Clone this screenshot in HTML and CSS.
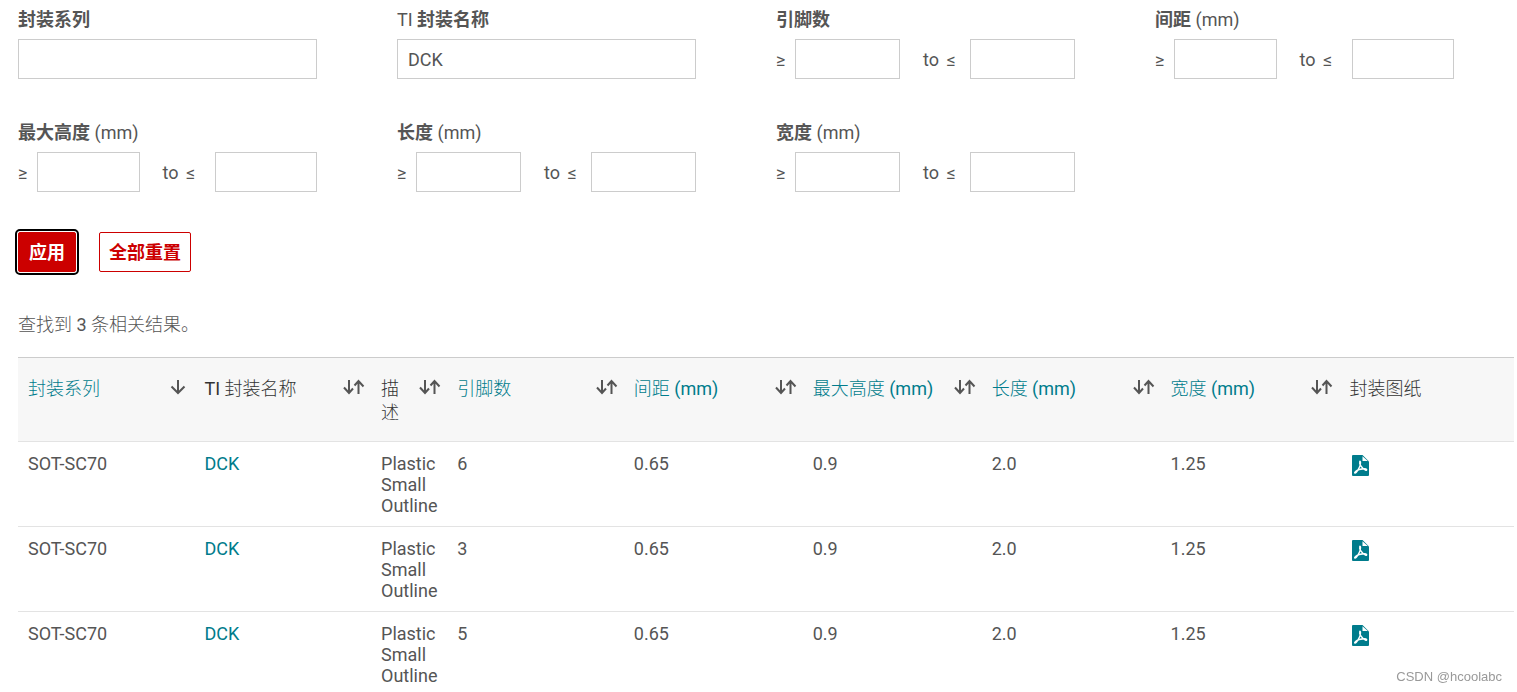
FILE: index.html
```html
<!DOCTYPE html>
<html lang="zh-CN">
<head>
<meta charset="utf-8">
<title>封装查找</title>
<link rel="stylesheet" href="styles.css">
</head>
<body>
<svg class="sprite" aria-hidden="true">
  <symbol id="sort" viewBox="0 0 22 16"><path d="M6 1V14M1 8.500L6 14L10 9.500M15.500 15V2M11.500 6.500L15.500 2L20.500 7.500"/></symbol>
  <symbol id="down" viewBox="0 0 16 16"><path d="M8 1V14M1.500 7.500L8 14L14.500 7.500"/></symbol>
  <symbol id="pdf" viewBox="0 0 17 21"><path fill="#007c8c" d="M1 0H10.500L17 6.500V20Q17 21 16 21H1Q0 21 0 20V1Q0 0 1 0Z"/><path fill="#fff" d="M10.500 1.200V6H15.800Z"/><path fill="none" stroke="#fff" stroke-width="1.400" stroke-linejoin="round" d="M7.800 6.500C7 9 9.500 13 13.500 15.200C15.500 16 15 13.500 12 13.700C8.500 13.900 5.500 14.800 3.500 16.500C1.800 18 3 18.800 4.500 17C6.800 14 8.500 10 8.500 7.500C8.500 6.500 8 6 7.800 6.500Z"/></symbol>
</svg>
<main class="page">
  <form>
    <div class="filters">
      <div class="field"><label for="family"><b>封装系列</b></label><input id="family" type="text"></div>
      <div class="field"><label for="name">TI <b>封装名称</b></label><input id="name" type="text" value="DCK"></div>
      <div class="field"><label for="pins"><b>引脚数</b></label>
        <div class="range"><span class="sign">≥</span><input id="pins" type="text"><span class="to">to <span class="sign">≤</span></span><input type="text" aria-label="引脚数最大值"></div></div>
      <div class="field"><label for="pitch"><b>间距</b> (mm)</label>
        <div class="range loose"><span class="sign">≥</span><input id="pitch" type="text"><span class="to">to <span class="sign">≤</span></span><input type="text" aria-label="间距最大值"></div></div>
      <div class="field"><label for="height"><b>最大高度</b> (mm)</label>
        <div class="range loose"><span class="sign">≥</span><input id="height" type="text"><span class="to">to <span class="sign">≤</span></span><input type="text" aria-label="高度最大值"></div></div>
      <div class="field"><label for="length"><b>长度</b> (mm)</label>
        <div class="range"><span class="sign">≥</span><input id="length" type="text"><span class="to">to <span class="sign">≤</span></span><input type="text" aria-label="长度最大值"></div></div>
      <div class="field"><label for="width"><b>宽度</b> (mm)</label>
        <div class="range"><span class="sign">≥</span><input id="width" type="text"><span class="to">to <span class="sign">≤</span></span><input type="text" aria-label="宽度最大值"></div></div>
    </div>
    <div class="actions"><button class="btn primary" type="button">应用</button><button class="btn" type="button">全部重置</button></div>
  </form>
  <p class="count">查找到 3 条相关结果。</p>
  <table class="results">
    <colgroup><col class="c-mid"><col class="c-mid"><col class="c-desc"><col class="c-mid"><col class="c-dim"><col class="c-dim"><col class="c-dim"><col class="c-dim"><col></colgroup>
    <thead><tr>
      <th><div class="head"><a href="#">封装系列</a><svg class="down"><use href="#down"/></svg></div></th>
      <th><div class="head"><span>TI 封装名称</span><svg class="sort"><use href="#sort"/></svg></div></th>
      <th><div class="head"><span>描述</span><svg class="sort"><use href="#sort"/></svg></div></th>
      <th><div class="head"><a href="#">引脚数</a><svg class="sort"><use href="#sort"/></svg></div></th>
      <th><div class="head"><a href="#">间距 (mm)</a><svg class="sort"><use href="#sort"/></svg></div></th>
      <th><div class="head"><a href="#">最大高度 (mm)</a><svg class="sort"><use href="#sort"/></svg></div></th>
      <th><div class="head"><a href="#">长度 (mm)</a><svg class="sort"><use href="#sort"/></svg></div></th>
      <th><div class="head"><a href="#">宽度 (mm)</a><svg class="sort"><use href="#sort"/></svg></div></th>
      <th><div class="head"><span>封装图纸</span></div></th>
    </tr></thead>
    <tbody>
      <tr><td>SOT-SC70</td><td><a href="#">DCK</a></td><td>Plastic Small Outline</td><td>6</td><td>0.65</td><td>0.9</td><td>2.0</td><td>1.25</td><td><a href="#" aria-label="PDF"><svg class="pdf"><use href="#pdf"/></svg></a></td></tr>
      <tr><td>SOT-SC70</td><td><a href="#">DCK</a></td><td>Plastic Small Outline</td><td>3</td><td>0.65</td><td>0.9</td><td>2.0</td><td>1.25</td><td><a href="#" aria-label="PDF"><svg class="pdf"><use href="#pdf"/></svg></a></td></tr>
      <tr><td>SOT-SC70</td><td><a href="#">DCK</a></td><td>Plastic Small Outline</td><td>5</td><td>0.65</td><td>0.9</td><td>2.0</td><td>1.25</td><td><a href="#" aria-label="PDF"><svg class="pdf"><use href="#pdf"/></svg></a></td></tr>
    </tbody>
  </table>
</main>
<div class="watermark">CSDN @hcoolabc</div>
</body>
</html>
```
FILE: styles.css
```css
* { box-sizing: border-box; }
html { scrollbar-width: none; }
body {
  margin: 0;
  background: #fff;
  color: #555;
  font: 18px/24px Roboto, "Noto Sans CJK SC", sans-serif;
}
.sprite { display: none; }
.page { padding: 8px 3px 0 18px; }
a { color: #007c8c; text-decoration: none; }

.filters {
  display: grid;
  grid-template-columns: repeat(4, 1fr);
  gap: 42px 80px;
  padding-right: 60px;
}
.field { display: flex; flex-direction: column; gap: 7px; }
.field label { display: block; height: 24px; }
input {
  width: 100%;
  min-width: 0;
  height: 40px;
  padding: 0 10px;
  border: 1px solid #ccc;
  border-radius: 0;
  background: #fff;
  color: #555;
  font: inherit;
}
.range {
  display: grid;
  grid-template-columns: 19px 1fr 70px 1fr;
  align-items: center;
}
.range.loose { grid-template-columns: 19px 1fr 75px 1fr; }
.range > span { padding-top: 2px; }
.to { padding-left: 23px; white-space: nowrap; }
.to .sign { margin-left: 3px; }

.actions { display: flex; gap: 23px; margin-top: 40px; }
.btn {
  height: 40px;
  padding: 2px 9px 0;
  border: 1px solid #c00;
  border-radius: 2px;
  background: #fff;
  color: #c00;
  font: inherit;
  font-weight: 700;
}
.btn.primary {
  padding: 2px 10px 0;
  background: #c00;
  color: #fff;
  outline: 2px solid #000;
  outline-offset: 1px;
}
.count { margin: 41px 0 20px; }
.count, th { font-family: Roboto, "Noto Sans CJK SC Light", "Noto Sans CJK SC DemiLight", "Noto Sans CJK SC", sans-serif; }

.results {
  width: 100%;
  table-layout: fixed;
  border-collapse: separate;
  border-spacing: 0;
}
.c-mid { width: 11.8%; }
.c-desc { width: 5.1%; }
.c-dim { width: 11.96%; }
th {
  padding: 19px 6px 16px 10px;
  border-top: 1px solid #ccc;
  border-bottom: 1px solid #e3e3e3;
  background: #f7f7f7;
  color: #333;
  font-weight: 400;
  text-align: left;
  vertical-align: top;
}
.head { display: flex; justify-content: space-between; gap: 3px; }
.head svg {
  flex: none;
  height: 16px;
  margin-top: 2px;
  fill: none;
  stroke: #555;
  stroke-width: 2;
}
.sort { width: 22px; }
.down { width: 16px; margin-right: 3px; }
td {
  padding: 11px 10px 10px;
  border-bottom: 1px solid #e3e3e3;
  line-height: 21px;
  vertical-align: top;
}
td:nth-child(3) { padding-right: 4px; }
.pdf { display: block; width: 17px; height: 21px; margin: 2px 3px 0; }

.watermark {
  position: fixed;
  right: 15px;
  bottom: 7px;
  color: #999;
  font: 13px/16px "Liberation Sans", sans-serif;
}
```
